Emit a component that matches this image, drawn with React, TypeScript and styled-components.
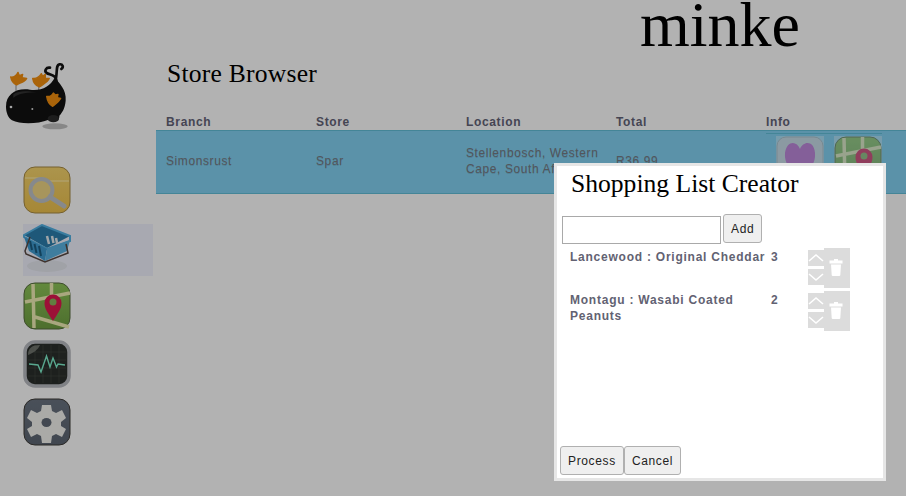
import React from "react";
import styled, { createGlobalStyle } from "styled-components";

const Global = createGlobalStyle`
  html, body { margin: 0; padding: 0; background: #fff; height: 100%; }
  #root { height: 100%; }
  * { box-sizing: border-box; }
`;

const Page = styled.div`
  position: relative; display: flex; width: 906px; height: 496px; overflow: hidden;
  font-family: "Liberation Sans", Arial, sans-serif; font-size: 12px; letter-spacing: .6px; color: #626272;
`;
const Sidebar = styled.aside`width: 156px; flex: none; padding-top: 55px;`;
const Logo = styled.svg`display: block; width: 80px; height: 80px; filter: blur(.4px);`;
const Nav = styled.nav`display: flex; flex-direction: column; gap: 6px; margin: 31px 0 0 23px; width: 130px;`;
const NavItem = styled.div<{ $active?: boolean }>`
  height: 52px; background: ${p => (p.$active ? "#f1f3fe" : "transparent")};
`;
const IconSvg = styled.svg`display: block; width: 48px; height: 48px; filter: blur(.35px);`;
const Main = styled.main`flex: 1; min-width: 0;`;
const Brand = styled.h1`
  margin: 0; padding-left: 484px; height: 52px; font: 400 64px/50px "Liberation Serif", "Times New Roman", serif;
  letter-spacing: 0; color: #000;
`;
const PageTitle = styled.h2`
  margin: 9px 0 0 11px; height: 26px; font: 400 25.6px/26px "Liberation Serif", "Times New Roman", serif;
  letter-spacing: .22px; color: #000;
`;
const HeadRow = styled.div`
  display: grid; grid-template-columns: repeat(5, 150px); margin-top: 25px; height: 18px;
  font-weight: 700; line-height: 20px; letter-spacing: .65px; color: #646478;
`;
const HeadCell = styled.div`padding-left: 10px;`;
const BodyRow = styled.div`
  display: grid; grid-template-columns: repeat(4, 150px) 140px; height: 64px; align-items: center;
  background: #83d1f2; border-top: 1px solid #62bfd9; border-bottom: 1px solid #62bfd9;
  line-height: 16px; color: #767b84; text-shadow: 0 1px 0 rgba(0,0,0,.12);
`;
const Cell = styled.div`padding: 0 0 2px 10px;`;
const InfoCell = styled.div`
  display: flex; gap: 10px; align-self: start; margin: 2px 0 0 10px; width: 116px; padding: 2px 0 0 10px;
  border-top: 1px solid #62bfd9;
`;
const InfoTile = styled.div`width: 48px; height: 48px; background: rgba(255,255,255,.32); svg { opacity: .68; }`;
const Backdrop = styled.div`position: absolute; inset: 0; background: rgba(0,0,0,.3);`;
const Modal = styled.section`
  position: absolute; left: 554px; top: 163px; width: 332px; height: 318px;
  background: #fff; border: 3px solid #e6e6e6; padding: 0 3px 3px; display: flex; flex-direction: column;
`;
const ModalTitle = styled.h2`
  margin: 4px 0 0 11px; height: 28px; font: 400 25.6px/27px "Liberation Serif", "Times New Roman", serif;
  letter-spacing: 0; color: #000;
`;
const AddBar = styled.div`display: flex; align-items: flex-start; gap: 2px; margin: 16px 0 0 2px; height: 34px;`;
const TextInput = styled.input`
  width: 159px; height: 28px; margin-top: 2px; border: 1px solid #a9a9a9; background: #fff; padding: 0; outline: none;
`;
const Btn = styled.button`
  height: 29px; padding: 0 7px; border: 1px solid #b0b0b0; border-radius: 3px; background: #efefef;
  font: 400 12px "Liberation Sans", Arial, sans-serif; letter-spacing: .65px; color: #222;
`;
const List = styled.div`display: flex; flex-direction: column; gap: 3px; flex: 1;`;
const Item = styled.div`display: flex; height: 40px; align-items: flex-start; padding-left: 10px;`;
const ItemName = styled.div`width: 201px; padding-top: 1px; font-weight: 700; line-height: 16px; letter-spacing: .76px; color: #626272;`;
const ItemQty = styled.div`width: 37px; padding-top: 1px; font-weight: 700; line-height: 16px; color: #626272;`;
const Stepper = styled.div`display: flex; flex-direction: column; gap: 3px; width: 16px; margin-top: 2px;`;
const StepBtn = styled.div`height: 16px; background: #dcdcdc; display: flex; align-items: center; justify-content: center;`;
const Trash = styled.div`width: 26px; height: 40px; background: #dcdcdc; display: flex; align-items: center; justify-content: center; padding-right: 2px;`;
const Footer = styled.div`display: flex;`;

const Chevron = ({ up }: { up?: boolean }) => (
  <svg width="16" height="16" viewBox="0 0 16 16" fill="none" stroke="#fff" strokeWidth="1.6">
    <path d={up ? "M1 11L8 5l7 6" : "M1 5l7 6 7-6"} />
  </svg>
);
const TrashGlyph = () => (
  <svg width="14" height="20" viewBox="0 0 14 20" fill="#fff">
    <path d="M5 1h4v1.500h4.500V5.500H.5V2.500H5z" />
    <path d="M2 6.500h10l-.7 10.500q-.1 1-1.100 1H3.800q-1 0-1.100-1z" />
  </svg>
);

const Whale = () => (
  <Logo viewBox="0 0 240 240">
    <ellipse cx="165" cy="214" rx="38" ry="9" fill="#a8a8a8" opacity=".7" />
    <g stroke="#aaa" strokeWidth="4"><path d="M48 78v32M116 82v28M160 140v40" /></g>
    <path d="M18 155C18 116 50 98 90 104C126 108 150 94 164 68C178 84 200 104 197 137C195 160 186 174 178 182C180 198 160 204 146 194C112 208 60 208 36 196C24 188 18 172 18 155Z" fill="#121212" />
    <path d="M170 80C170 60 150 60 140 54C132 48 138 36 150 38M168 70C172 46 168 30 178 28C188 26 192 36 184 42" fill="none" stroke="#121212" strokeWidth="8" strokeLinecap="round" />
    <path d="M40 118C60 104 90 110 110 112C84 112 60 114 40 128Z" fill="#4a4a4a" opacity=".6" />
    <ellipse cx="160" cy="191" rx="17" ry="11" fill="#2a2a2a" />
    <circle cx="33" cy="156" r="4" fill="#eee" /><circle cx="97" cy="162" r="3" fill="#ddd" />
    <g fill="#f4900f" stroke="#f4900f" strokeWidth="4" strokeLinejoin="round">
      <path d="M32 66C42 68 50 60 54 52L58 62L68 58L66 68L80 70C74 82 58 84 50 90C40 86 34 78 32 66Z" />
      <path d="M98 70C110 72 118 66 124 56L128 64L136 58L136 70L148 70C142 84 128 88 118 96C108 92 100 84 98 70Z" />
      <path d="M140 124C150 126 156 122 160 114L166 120L174 118L172 128L182 130C174 144 166 146 158 154C150 150 142 138 140 124Z" />
    </g>
  </Logo>
);
const Tile = ({ id, c1, c2, stroke }: { id: string; c1: string; c2: string; stroke: string }) => (
  <>
    <defs><linearGradient id={id} x1="0" y1="0" x2="0" y2="1"><stop offset="0" stopColor={c1} /><stop offset="1" stopColor={c2} /></linearGradient></defs>
    <rect x="1" y="1" width="46" height="46" rx="11" fill={`url(#${id})`} stroke={stroke} />
  </>
);
const SearchIcon = () => (
  <IconSvg viewBox="0 0 48 48">
    <Tile id="fold" c1="#f6d56e" c2="#eec24e" stroke="#a78a44" />
    <path d="M2 12h18l3 3h23" stroke="#fbe596" strokeWidth="1.500" fill="none" />
    <circle cx="18.500" cy="24" r="11" fill="#f0d684" stroke="#c0c4c9" strokeWidth="4" />
    <path d="M27 31l14 9" stroke="#c0c4c9" strokeWidth="5" strokeLinecap="round" />
  </IconSvg>
);
const BasketIcon = () => (
  <IconSvg viewBox="0 0 48 48">
    <ellipse cx="24" cy="42" rx="20" ry="6" fill="#e6e8ef" />
    <path d="M1 11L19 1L47 12L24 24Z" fill="#2c7fae" />
    <path d="M1 11L19 1L47 12L47 17L24 25L1 13Z" fill="none" stroke="#52b2e4" strokeWidth="2" />
    <path d="M24 12l2 8M29 12l1.500 7M33 14l1 5" stroke="#e6eef2" strokeWidth="2.500" />
    <path d="M1 13L24 25L22 37L6 27Z" fill="#3f9bd0" />
    <path d="M24 25L47 16L44 27L22 37Z" fill="#5bb4e2" />
    <g stroke="#1c5d82" strokeWidth="2"><path d="M7 17l2 9M11.500 20l2 9M16 22l2 10" /></g>
    <path d="M7 13L2 27L3 30L22 38L45 29L43 20" fill="none" stroke="#5a4a44" strokeWidth="1.500" />
  </IconSvg>
);
const MapIcon = ({ id = "map" }: { id?: string }) => (
  <IconSvg viewBox="0 0 48 48">
    <Tile id={id} c1="#8ec558" c2="#6f9f42" stroke="#586d3f" />
    <g stroke="#f2efb7" strokeWidth="3.500" fill="none">
      <path d="M10 2L11 46M28.500 1v14M2 20L47 11M12 35L46 45" />
    </g>
    <path d="M30 39C25 31 21.500 27 21.500 21A8.500 8.500 0 0 1 38.500 21C38.500 27 35 31 30 39Z" fill="#e0184f" />
    <circle cx="30" cy="20" r="3.500" fill="#8cb35c" />
  </IconSvg>
);
const MonitorIcon = () => (
  <IconSvg viewBox="0 0 48 48">
    <rect x="2" y="2" width="44" height="44" rx="10" fill="#2a2e2b" stroke="#b8bac0" strokeWidth="3.500" />
    <g stroke="#454a45" strokeWidth=".6">
      <path d="M5 12h38M5 20h38M5 28h38M5 36h38M12 5v38M20 5v38M28 5v38M36 5v38" />
    </g>
    <path d="M6 24l9 1 3 7 5.500-16 3.500 11 3-9 3.500 9 1.500-3 7 1" fill="none" stroke="#7ff0cc" strokeWidth="1.400" />
    <path d="M5 15C5 8 9 5 17 5C15 10 10 13 5 15Z" fill="#8b8f88" opacity=".7" />
  </IconSvg>
);
const GearIcon = () => (
  <IconSvg viewBox="0 0 48 48">
    <Tile id="gear" c1="#6a7380" c2="#5c6572" stroke="#3d3a36" />
    <path d="M19 7h9l1 6 4 2 6-3 4 8-5 4v4l5 3-4 8-6-3-4 2-1 7h-9l-1-7-4-2-6 3-4-8 5-3v-4l-5-4 4-8 6 3 4-2z" fill="#f4f4ef" />
    <ellipse cx="23.500" cy="24.500" rx="5" ry="4.500" fill="#5f6874" />
  </IconSvg>
);
const HeartIcon = () => (
  <IconSvg viewBox="0 0 48 48">
    <rect x="1" y="1" width="46" height="46" rx="9" fill="#d6dde2" stroke="#aeb6bc" />
    <path d="M24 44C14 34 8 27 9 17C11 4 21 5 24 13C27 5 38 4 39 17C40 27 34 34 24 44Z" fill="#c65fd0" />
  </IconSvg>
);

const items = [
  { name: "Lancewood : Original Cheddar", qty: 3 },
  { name: "Montagu : Wasabi Coated Peanuts", qty: 2 },
];

export default function App() {
  return (
    <>
      <Global />
      <Page>
        <Sidebar>
          <Whale />
          <Nav>
            <NavItem><SearchIcon /></NavItem>
            <NavItem $active><BasketIcon /></NavItem>
            <NavItem><MapIcon /></NavItem>
            <NavItem><MonitorIcon /></NavItem>
            <NavItem><GearIcon /></NavItem>
          </Nav>
        </Sidebar>
        <Main>
          <Brand>minke</Brand>
          <PageTitle>Store Browser</PageTitle>
          <HeadRow>
            <HeadCell>Branch</HeadCell><HeadCell>Store</HeadCell><HeadCell>Location</HeadCell><HeadCell>Total</HeadCell><HeadCell>Info</HeadCell>
          </HeadRow>
          <BodyRow>
            <Cell>Simonsrust</Cell>
            <Cell>Spar</Cell>
            <Cell>Stellenbosch, Western Cape, South Africa</Cell>
            <Cell>R36.99</Cell>
            <InfoCell>
              <InfoTile><HeartIcon /></InfoTile>
              <InfoTile><MapIcon id="map2" /></InfoTile>
            </InfoCell>
          </BodyRow>
        </Main>
        <Backdrop />
        <Modal>
          <ModalTitle>Shopping List Creator</ModalTitle>
          <AddBar><TextInput /><Btn>Add</Btn></AddBar>
          <List>
            {items.map(it => (
              <Item key={it.name}>
                <ItemName>{it.name}</ItemName>
                <ItemQty>{it.qty}</ItemQty>
                <Stepper><StepBtn><Chevron up /></StepBtn><StepBtn><Chevron /></StepBtn></Stepper>
                <Trash><TrashGlyph /></Trash>
              </Item>
            ))}
          </List>
          <Footer><Btn>Process</Btn><Btn>Cancel</Btn></Footer>
        </Modal>
      </Page>
    </>
  );
}
